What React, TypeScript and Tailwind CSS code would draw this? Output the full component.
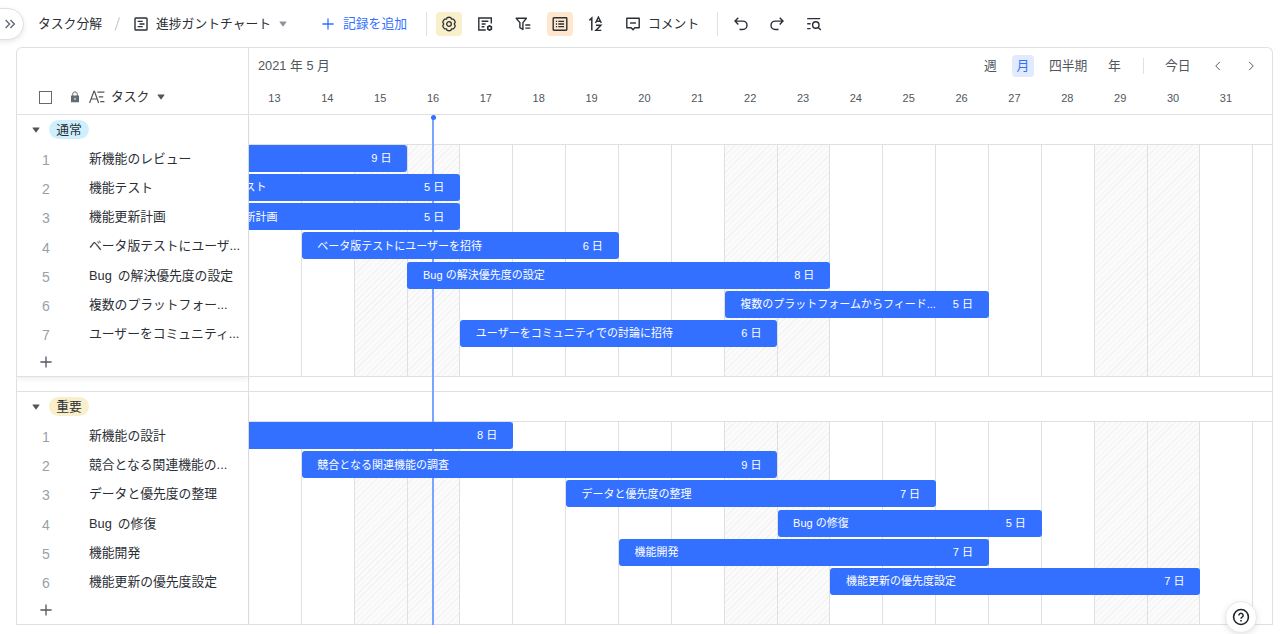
import type { ReactNode } from "react";
import clsx from "clsx";

const DAY_WIDTH = 52.87;
const FIRST_DAY = 13;
const DAYS = Array.from({ length: 19 }, (_, i) => FIRST_DAY + i);
const WEEKENDS = [15, 16, 22, 23, 29, 30];

interface Task {
  name: string;
  barName?: string;
  start: number;
  length: number;
}

interface Group {
  label: string;
  tagClass: string;
  tasks: Task[];
}

const GROUPS: Group[] = [
  {
    label: "通常",
    tagClass: "bg-[#d0effd]",
    tasks: [
      { name: "新機能のレビュー", start: 7, length: 9 },
      { name: "機能テスト", start: 12, length: 5 },
      { name: "機能更新計画", start: 12, length: 5 },
      { name: "ベータ版テストにユーザ...", barName: "ベータ版テストにユーザーを招待", start: 14, length: 6 },
      { name: "Bug の解決優先度の設定", start: 16, length: 8 },
      { name: "複数のプラットフォー...", barName: "複数のプラットフォームからフィード...", start: 22, length: 5 },
      { name: "ユーザーをコミュニティ...", barName: "ユーザーをコミュニティでの討論に招待", start: 17, length: 6 },
    ],
  },
  {
    label: "重要",
    tagClass: "bg-[#faefcb]",
    tasks: [
      { name: "新機能の設計", start: 10, length: 8 },
      { name: "競合となる関連機能の...", barName: "競合となる関連機能の調査", start: 14, length: 9 },
      { name: "データと優先度の整理", start: 19, length: 7 },
      { name: "Bug の修復", start: 23, length: 5 },
      { name: "機能開発", start: 20, length: 7 },
      { name: "機能更新の優先度設定", start: 24, length: 7 },
    ],
  },
];

const Icon = ({ children, className }: { children: ReactNode; className?: string }) => (
  <svg
    viewBox="0 0 16 16"
    fill="none"
    stroke="currentColor"
    strokeWidth="1.3"
    className={clsx("shrink-0", className ?? "h-4 w-4")}
  >
    {children}
  </svg>
);

const Caret = ({ className }: { className?: string }) => (
  <svg viewBox="0 0 8 6" className={clsx("h-1.5 w-2 shrink-0", className)}>
    <path d="M0.8 0.5h6.4a.4.4 0 0 1 .3.6L4.4 5.3a.5.5 0 0 1-.8 0L.5 1.1a.4.4 0 0 1 .3-.6Z" fill="currentColor" />
  </svg>
);

const PlusIcon = () => (
  <Icon>
    <path d="M8 2.4v11.2M2.4 8h11.2" />
  </Icon>
);

const Toolbar = () => (
  <header className="flex h-[47px] items-center text-[12.8px] text-[#2b2f36]">
    <button className="-ml-4 flex h-8 w-10 items-center justify-end rounded-full border border-[#dee0e3] bg-white pr-[6px] text-[#646a73] shadow-[0_2px_5px_rgba(31,35,41,0.1)]">
      <Icon className="h-3.5 w-3.5">
        <path d="m3 3.5 4.5 4.5L3 12.5M8.5 3.5 13 8l-4.5 4.5" strokeWidth="1.6" />
      </Icon>
    </button>
    <span className="ml-[14px] w-16 whitespace-nowrap">タスク分解</span>
    <svg viewBox="0 0 8 14" className="ml-[11px] h-3.5 w-2 shrink-0" fill="none" stroke="#bbbfc4">
      <path d="M6.5 0.5 2 13.5" />
    </svg>
    <Icon className="ml-3 h-4 w-4">
      <rect x="2" y="2" width="12" height="12" rx="0.8" strokeWidth="1.4" />
      <path d="M4.7 5.3h5M6.5 8h5M4.7 10.7h5" />
    </Icon>
    <span className="ml-[7px] w-[114px] whitespace-nowrap">進捗ガントチャート</span>
    <Caret className="ml-[9px] text-[#8f959e]" />
    <button className="ml-[33px] flex items-center text-[#3370ff]">
      <PlusIcon />
      <span className="ml-[7px] w-16 whitespace-nowrap">記録を追加</span>
    </button>
    <div className="ml-[19px] h-6 w-px bg-[#dee0e3]" />
    <div className="ml-[9px] flex h-6 w-[26px] items-center justify-center rounded bg-[#faefcb]">
      <Icon>
        <path
          d="M6.2 1.6Q8 .9 9.8 1.6L10.6 3.2 12.4 3.2Q14 4.4 14.2 6.3L13.2 8l1 1.7Q14 11.6 12.4 12.8L10.6 12.8 9.8 14.4Q8 15.1 6.2 14.4L5.4 12.8 3.6 12.8Q2 11.6 1.8 9.7L2.8 8l-1-1.7Q2 4.4 3.6 3.2L5.4 3.2Z"
          strokeLinejoin="round"
        />
        <circle cx="8" cy="8" r="2.3" />
      </Icon>
    </div>
    <Icon className="ml-[15px] h-4 w-4">
      <path d="M14.3 7.4V2H1.8v12h7M4.6 5.3h6.8M4.6 8h4M4.6 10.7h2.8" strokeWidth="1.4" />
      <circle cx="12.6" cy="12" r="1.9" strokeWidth="1.6" />
      <path d="M12.6 9.1v1M12.6 13.9v1M10.1 10.6l.9.5M14.2 12.9l.9.5M10.1 13.4l.9-.5M14.2 11.1l.9-.5" strokeWidth="1" />
    </Icon>
    <Icon className="ml-[22px] h-4 w-4">
      <path d="M1.2 2.2h10.2L7.9 6.6v6.9l-3-1.8V6.6Z" strokeLinejoin="round" strokeWidth="1.4" />
      <path d="M10.3 9h5M10.3 12.2h5" />
    </Icon>
    <div className="ml-4 flex h-6 w-[26px] items-center justify-center rounded bg-[#fee7cd]">
      <Icon>
        <rect x="1.2" y="1.8" width="13.6" height="12.4" rx="0.6" strokeWidth="1.4" />
        <path d="M3.9 5.3h1.2M6.3 5.3h5.8M3.9 8h1.2M6.3 8h5.8M3.9 10.7h1.2M6.3 10.7h5.8" />
      </Icon>
    </div>
    <Icon className="ml-[15px] h-4 w-4">
      <path d="M1.4 4.4 3.8 2v12.4" strokeWidth="1.5" />
      <path d="m7.5 7 2.9-5.9L13.3 7M8.5 5.2h3.8M7.9 9.3h5l-5 5.1h5.4" strokeWidth="1.4" />
    </Icon>
    <Icon className="ml-[21px] h-4 w-4">
      <path d="M1.8 2.2h12.4v9.6H9.8L8 13.8l-1.8-2H1.8Z" strokeLinejoin="round" strokeWidth="1.4" />
      <path d="M5 7h6" strokeWidth="1.4" />
    </Icon>
    <span className="ml-[7px] w-[51px] whitespace-nowrap">コメント</span>
    <div className="ml-[18px] h-6 w-px bg-[#dee0e3]" />
    <Icon className="ml-[15px] h-4 w-4">
      <path d="M5.3 1.8 2 5.1l3.3 3.3M2.2 5.1h7.6a4.1 4.1 0 0 1 0 8.4H6.5" strokeWidth="1.4" />
    </Icon>
    <Icon className="ml-5 h-4 w-4">
      <path d="m10.7 1.8 3.3 3.3-3.3 3.3M13.8 5.1H6.2a4.1 4.1 0 0 0 0 8.4h3.3" strokeWidth="1.4" />
    </Icon>
    <Icon className="ml-[21px] h-4 w-4">
      <path d="M1.2 2.6h13M1.2 7.8h3.4M1.2 12.6h3.4" strokeWidth="1.4" />
      <circle cx="9.8" cy="9" r="3.2" strokeWidth="1.4" />
      <path d="m12.1 11.3 2.7 2.7" strokeWidth="1.4" />
    </Icon>
  </header>
);

const TableHead = () => (
  <div className="flex h-[67px] items-end border-b border-[#dee0e3] pb-[9px]">
    <div className="flex h-4 items-center text-[12.8px] text-[#2b2f36]">
      <span className="ml-[22px] h-[13px] w-[13px] border border-[#646a73]" />
      <svg viewBox="0 0 10 12" className="ml-[18px] h-3 w-2.5 text-[#646a73]">
        <path d="M2.7 5V3.2a2.3 2.3 0 0 1 4.6 0V5" fill="none" stroke="currentColor" />
        <path d="M1 4.6h8v6.6H1ZM4.5 6.7v2.2h1V6.7Z" fill="currentColor" fillRule="evenodd" />
      </svg>
      <Icon className="ml-[9px] h-4 w-4 text-[#51565d]">
        <path d="M.6 14 4.9 2.4h.6L9.6 14M2.2 10h5.8M8.4 3.2h7M9.8 7.8h4.4M11.2 12.6h4.2" strokeWidth="1.2" />
      </Icon>
      <span className="ml-[6px] w-[38px] whitespace-nowrap">タスク</span>
      <Caret className="ml-2 text-[#51565d]" />
    </div>
  </div>
);

const TableGroup = ({ group }: { group: Group }) => (
  <section className="border-b border-[#dee0e3] bg-white shadow-[0_3px_4px_rgba(31,35,41,0.06)]">
    <div className="flex h-[29px] items-center pl-[15px]">
      <Caret className="text-[#51565d]" />
      <span
        className={clsx(
          "ml-[9px] flex h-[19px] w-10 items-center justify-center rounded-full text-[12.8px] text-[#2b2f36]",
          group.tagClass,
        )}
      >
        {group.label}
      </span>
    </div>
    {group.tasks.map((task, i) => (
      <div key={task.name} className="flex h-[29.17px] items-center">
        <span className="ml-[21px] w-4 pt-[3px] text-center text-[14px] leading-5 text-[#999fa8]">
          {i + 1}
        </span>
        <span className="ml-[35px] text-[12.8px] whitespace-nowrap text-[#2b2f36] [word-spacing:2.5px]">{task.name}</span>
      </div>
    ))}
    <div className="flex h-7 items-center pl-[21px] text-[#51565d]">
      <PlusIcon />
    </div>
  </section>
);

const TimelineHead = () => (
  <div className="h-[67px] border-b border-[#dee0e3] text-[#51565d]">
    <div className="flex h-[35px] items-center text-[12.8px]">
      <span className="ml-[9px]">2021 年 5 月</span>
      <div className="ml-auto flex items-center">
        <span className="w-[13px]">週</span>
        <span className="ml-[15px] flex h-[22px] w-[22px] items-center justify-center rounded bg-[#e1eaff] text-[#3370ff]">
          月
        </span>
        <span className="ml-[15px] w-[39px] whitespace-nowrap">四半期</span>
        <span className="ml-5 w-[13px]">年</span>
        <div className="ml-[22px] h-4 w-px bg-[#dee0e3]" />
        <span className="ml-[21px] w-[26px] whitespace-nowrap">今日</span>
        <Icon className="ml-[21px] h-3 w-3">
          <path d="M10.5 2.5 5 8l5.5 5.5" />
        </Icon>
        <Icon className="mr-[15px] ml-[21px] h-3 w-3">
          <path d="M5.5 2.5 11 8l-5.5 5.5" />
        </Icon>
      </div>
    </div>
    <div className="-ml-px flex h-[30px] items-center overflow-hidden pt-px text-[11px]">
      {DAYS.map((day) => (
        <span key={day} className="w-[52.87px] shrink-0 text-center">
          {day}
        </span>
      ))}
    </div>
  </div>
);

const TaskBar = ({ task }: { task: Task }) => (
  <div className="h-[29.17px]">
    <div
      className="relative z-20 flex h-[27px] items-center justify-between rounded-[3px] bg-[#3370ff] pr-4 pl-[15.6px] text-[11px] whitespace-nowrap text-white"
      style={{
        marginLeft: (task.start - FIRST_DAY) * DAY_WIDTH - 0.2,
        width: task.length * DAY_WIDTH,
      }}
    >
      <span>{task.barName ?? task.name}</span>
      <span>{task.length} 日</span>
    </div>
  </div>
);

const TimelineGroup = ({ group }: { group: Group }) => (
  <section className="overflow-hidden border-b border-[#dee0e3]">
    <div className="h-[29px]" />
    <div className="grid border-t border-[#dee0e3]">
      <div className="col-start-1 row-start-1 flex">
        {DAYS.map((day) => (
          <div
            key={day}
            className={clsx(
              "w-[52.87px] shrink-0 border-r border-[#dee0e3]",
              WEEKENDS.includes(day) &&
                "bg-[repeating-linear-gradient(135deg,#fbfbfb_0px,#fbfbfb_3px,#f3f3f3_3px,#f3f3f3_4px)]",
            )}
          />
        ))}
      </div>
      <div className="col-start-1 row-start-1 min-w-0 pb-[27px]">
        {group.tasks.map((task) => (
          <TaskBar key={task.name} task={task} />
        ))}
      </div>
    </div>
  </section>
);

export default function App() {
  return (
    <div className="relative h-[634px] w-[1280px] overflow-hidden bg-white font-['Liberation_Sans','Noto_Sans_CJK_JP',sans-serif]">
      <Toolbar />
      <main className="ml-4 flex w-[1257px] overflow-hidden rounded-t-md border border-b-0 border-[#dee0e3]">
        <div className="w-[232px] shrink-0 border-r border-[#dee0e3]">
          <TableHead />
          <TableGroup group={GROUPS[0]} />
          <div className="h-[15px] border-b border-[#dee0e3]" />
          <TableGroup group={GROUPS[1]} />
        </div>
        <div className="relative min-w-0 flex-1">
          <TimelineHead />
          <TimelineGroup group={GROUPS[0]} />
          <div className="h-[15px] border-b border-[#dee0e3]" />
          <TimelineGroup group={GROUPS[1]} />
          {/* today marker, bars stay above it */}
          <div className="absolute top-[68px] bottom-0 left-[183px] z-10 w-0.5 bg-[#7ba3ff]">
            <span className="absolute -top-px -left-[1.5px] h-[5px] w-[5px] rounded-full bg-[#3370ff]" />
          </div>
        </div>
      </main>
      <button className="absolute top-[601px] left-[1225px] z-30 flex h-8 w-8 items-center justify-center rounded-full border border-[#e8e9eb] bg-white text-[#1f2329] shadow-[0_2px_6px_rgba(31,35,41,0.12)]">
        <Icon className="h-[18px] w-[18px]">
          <circle cx="8" cy="8" r="6.6" strokeWidth="1.4" />
          <path d="M6.1 6.6a1.9 1.9 0 1 1 2.9 1.6c-.7.4-1 .7-1 1.4" strokeWidth="1.3" />
          <path d="M8 10.7V12" strokeWidth="1.4" />
        </Icon>
      </button>
    </div>
  );
}
